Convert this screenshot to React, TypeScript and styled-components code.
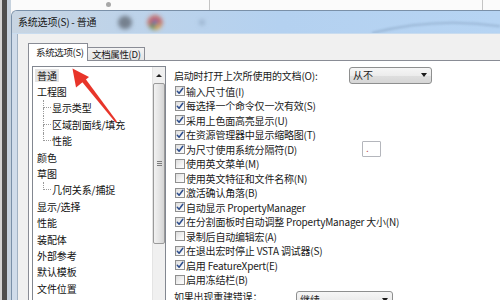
import React from 'react';
import styled, { createGlobalStyle } from 'styled-components';

const Global = createGlobalStyle`
  html, body { margin: 0; padding: 0; background: #fff; }
  body { font-family: "Noto Sans CJK SC", "Noto Sans", sans-serif; }
  * { box-sizing: border-box; }
`;

const Page = styled.div`
  width: 500px;
  height: 300px;
  overflow: hidden;
  display: flex;
  position: relative;
  font-size: 10px;
  color: #1a1a1a;
  background: #f6f6f6;
`;

const DesktopEdge = styled.div`
  width: 11px;
  flex: none;
  background: linear-gradient(to right, #d4d4d4 0 2px, #4e4e4e 2px 7px, #c6d2de 7px 11px);
`;

const Main = styled.div`
  flex: 1;
  min-width: 0;
  display: flex;
  flex-direction: column;
  background: #f6f6f6;
`;

const TopStrip = styled.div`
  height: 10px;
  flex: none;
  display: flex;
  background: #fbfbfb;
`;

const StripCell = styled.div<{ $w?: number }>`
  ${(p) => (p.$w ? `width:${p.$w}px; flex:none;` : 'flex:1;')}
  display: flex;
  align-items: center;
`;

const StripLine = styled.div`
  width: 1px;
  background: #c4c4c4;
`;

const Dot = styled.span`
  width: 5px;
  height: 5px;
  border-radius: 50%;
  background: #a8a8a8;
  margin-left: 95px;
  margin-top: -2px;
`;

const Window = styled.div`
  flex: 1;
  min-height: 0;
  display: flex;
  flex-direction: column;
  border-top: 1px solid #7a90a8;
  border-left: 1px solid #7a90a8;
  border-top-left-radius: 6px;
  overflow: hidden;
  background: #cfdcea;
`;

const TitleBar = styled.div`
  height: 23px;
  flex: none;
  position: relative;
  display: flex;
  align-items: center;
  padding-left: 6px;
  background: linear-gradient(to right, #c8d5e2 0%, #bed3e9 22%, #b4d1f0 55%, #b6d4f3 100%);
  border-bottom: 1px solid #c9dcef;
`;

const TitleDecor = styled.svg`
  position: absolute;
  left: 0;
  top: 0;
  width: 100%;
  height: 100%;
`;

const TitleText = styled.span`
  position: relative;
  font-size: 10px;
  line-height: 14px;
  letter-spacing: -0.2px;
  color: #151515;
`;

const Body = styled.div`
  flex: 1;
  min-height: 0;
  display: flex;
`;

const FrameSide = styled.div`
  width: 6px;
  flex: none;
  background: #d0dcea;
  border-right: 1px solid #a2b2c3;
`;

const Content = styled.div`
  flex: 1;
  min-width: 0;
  background: #f0f0f0;
  padding: 9px 0 0 10px;
  display: flex;
  flex-direction: column;
`;

const TabBar = styled.div`
  height: 17px;
  flex: none;
  display: flex;
  align-items: flex-end;
`;

const Tab = styled.div<{ $active?: boolean; $w: number }>`
  width: ${(p) => p.$w}px;
  height: ${(p) => (p.$active ? 18 : 13)}px;
  margin-bottom: ${(p) => (p.$active ? -1 : 0)}px;
  padding-left: ${(p) => (p.$active ? 7 : 4)}px;
  padding-top: ${(p) => (p.$active ? 2 : 0)}px;
  border: 1px solid #898c95;
  border-bottom: none;
  ${(p) => (p.$active ? '' : 'border-left: none;')}
  background: ${(p) => (p.$active ? '#fff' : 'linear-gradient(#f3f3f3, #e4e4e4)')};
  position: relative;
  z-index: ${(p) => (p.$active ? 1 : 0)};
  font-size: 9.5px;
  line-height: 12px;
  letter-spacing: -0.35px;
  white-space: nowrap;
  color: #1a1a1a;
`;

const Panel = styled.div`
  flex: 1;
  min-height: 0;
  background: #fff;
  border-top: 1px solid #898c95;
  border-left: 1px solid #898c95;
  padding: 5px 0 0 3px;
  display: flex;
  align-items: flex-start;
`;

const Tree = styled.div`
  width: 134px;
  height: 250px;
  flex: none;
  border: 1px solid #828790;
  display: flex;
  background: #fff;
`;

const TreeList = styled.div`
  flex: 1;
  min-width: 0;
  padding-left: 4px;
  display: flex;
  flex-direction: column;
`;

const TreeRow = styled.div`
  height: 16.4px;
  flex: none;
  display: flex;
  align-items: stretch;
  white-space: nowrap;
`;

const TreeText = styled.span<{ $sel?: boolean }>`
  align-self: center;
  line-height: 13px;
  font-size: 10px;
  letter-spacing: -0.1px;
  color: #111;
  ${(p) => (p.$sel ? 'background:#e4e4e4; padding: 0 2px; margin-left:-2px;' : '')}
`;

const Connector = styled.span`
  width: 8px;
  margin-left: 6px;
  margin-right: 1px;
  display: flex;
  flex-direction: column;
  flex: none;
`;

const ConnTop = styled.span`
  flex: 1;
  border-left: 1px dotted #9a9a9a;
  border-bottom: 1px dotted #9a9a9a;
`;

const ConnBottom = styled.span<{ $last?: boolean }>`
  flex: 1;
  border-left: 1px dotted ${(p) => (p.$last ? 'transparent' : '#9a9a9a')};
`;

const ScrollBar = styled.div`
  width: 13px;
  flex: none;
  background: #f0f0f0;
  border-left: 1px solid #e4e4e4;
  display: flex;
  flex-direction: column;
`;

const ScrollUp = styled.div`
  height: 15px;
  flex: none;
  display: flex;
  align-items: center;
  justify-content: center;
  padding-top: 1px;
`;

const UpTri = styled.span`
  width: 0;
  height: 0;
  border-left: 3px solid transparent;
  border-right: 3px solid transparent;
  border-bottom: 3px solid #222;
`;

const Thumb = styled.div`
  height: 161px;
  flex: none;
  margin: 1px 0 0 0;
  border: 1px solid #9a9a9a;
  border-radius: 2px;
  background: linear-gradient(to right, #f2f2f2, #e2e2e2 60%, #d4d4d4);
  display: flex;
  align-items: center;
  justify-content: center;
`;

const Grip = styled.span`
  width: 5px;
  height: 5px;
  background: repeating-linear-gradient(#7c7c7c 0 1px, transparent 1px 2px);
`;

const Right = styled.div`
  margin-left: 8px;
  display: flex;
  flex-direction: column;
  flex: 1;
  min-width: 0;
`;

const LabelRow = styled.div`
  height: 18px;
  display: flex;
  align-items: center;
  white-space: nowrap;
`;

const Label = styled.span<{ $w?: number }>`
  font-size: 10px;
  line-height: 13px;
  letter-spacing: -0.2px;
  color: #1a1a1a;
  white-space: nowrap;
  ${(p) => (p.$w ? `width:${p.$w}px; flex:none;` : '')}
`;

const Combo = styled.div<{ $w: number; $h: number; $top?: number }>`
  width: ${(p) => p.$w}px;
  height: ${(p) => p.$h}px;
  flex: none;
  margin-top: ${(p) => p.$top ?? 0}px;
  border: 1px solid #8e8f8f;
  border-radius: 3px;
  background: linear-gradient(#f6f6f6, #ececec 50%, #dfdfdf 50%, #d6d6d6);
  display: flex;
  align-items: center;
  padding: 0 4px 0 3px;
  font-size: 10px;
  line-height: 12px;
`;

const ComboText = styled.span`
  flex: 1;
`;

const DownTri = styled.span`
  width: 0;
  height: 0;
  border-left: 3px solid transparent;
  border-right: 3px solid transparent;
  border-top: 4px solid #1a1a1a;
`;

const CheckRow = styled.div`
  height: 14.5px;
  flex: none;
  display: flex;
  align-items: center;
  white-space: nowrap;
`;

const Box = styled.span`
  width: 10px;
  height: 10px;
  flex: none;
  margin-left: 1px;
  margin-right: 1px;
  border: 1px solid #8f8f8f;
  background: linear-gradient(135deg, #dcdcdc, #f4f4f4 60%, #fdfdfd);
  display: flex;
  align-items: center;
  justify-content: center;
`;

const SepBox = styled.span`
  width: 19px;
  height: 16px;
  flex: none;
  border: 1px solid #b4b6bc;
  border-radius: 1px;
  background: #fff;
  padding-left: 3px;
  font-size: 10px;
  line-height: 12px;
  color: #c05050;
`;

const BottomRow = styled.div`
  height: 20px;
  flex: none;
  display: flex;
  align-items: flex-start;
  padding-top: 3px;
  white-space: nowrap;
`;

const Overlay = styled.svg`
  position: absolute;
  left: 0;
  top: 0;
  pointer-events: none;
`;

type TreeItem = { t: string; sel?: boolean; child?: boolean; last?: boolean };

const treeItems: TreeItem[] = [
  { t: '普通', sel: true },
  { t: '工程图' },
  { t: '显示类型', child: true },
  { t: '区域剖面线/填充', child: true },
  { t: '性能', child: true, last: true },
  { t: '颜色' },
  { t: '草图' },
  { t: '几何关系/捕捉', child: true, last: true },
  { t: '显示/选择' },
  { t: '性能' },
  { t: '装配体' },
  { t: '外部参考' },
  { t: '默认模板' },
  { t: '文件位置' },
  { t: 'FeatureManager' },
];

type Opt = { t: string; on: boolean; sep?: boolean };

const options: Opt[] = [
  { t: '输入尺寸值(I)', on: true },
  { t: '每选择一个命令仅一次有效(S)', on: true },
  { t: '采用上色面高亮显示(U)', on: true },
  { t: '在资源管理器中显示缩略图(T)', on: true },
  { t: '为尺寸使用系统分隔符(D)', on: true, sep: true },
  { t: '使用英文菜单(M)', on: false },
  { t: '使用英文特征和文件名称(N)', on: false },
  { t: '激活确认角落(B)', on: true },
  { t: '自动显示 PropertyManager', on: true },
  { t: '在分割面板时自动调整 PropertyManager 大小(N)', on: true },
  { t: '录制后自动编辑宏(A)', on: false },
  { t: '在退出宏时停止 VSTA 调试器(S)', on: true },
  { t: '启用 FeatureXpert(E)', on: true },
  { t: '启用冻结栏(B)', on: false },
];

const CheckMark = () => (
  <svg width="8" height="8" viewBox="0 0 8 8">
    <path d="M1.3 4.3 L3.1 6.3 L6.8 1.2" fill="none" stroke="#2c4c8c" strokeWidth="1.5" strokeLinecap="round" strokeLinejoin="round" />
  </svg>
);

export default function App() {
  return (
    <>
      <Global />
      <Page>
        <DesktopEdge />
        <Main>
          <TopStrip>
            <StripCell $w={198}>
              <Dot />
            </StripCell>
            <StripLine />
            <StripCell $w={272} />
            <StripLine />
            <StripCell />
          </TopStrip>
          <Window>
            <TitleBar>
              <TitleDecor viewBox="0 0 488 23" preserveAspectRatio="none">
                <defs>
                  <filter id="bl" x="-50%" y="-50%" width="200%" height="200%">
                    <feGaussianBlur stdDeviation="2.2" />
                  </filter>
                  <filter id="bl2" x="-50%" y="-50%" width="200%" height="200%">
                    <feGaussianBlur stdDeviation="1.2" />
                  </filter>
                </defs>
                <g filter="url(#bl)">
                  <circle cx="113" cy="12" r="7" fill="#5d6670" opacity="0.75" />
                  <circle cx="143" cy="12" r="7.5" fill="#c84a3a" opacity="0.8" />
                  <path d="M137 15 A7 7 0 0 0 143 19.5 L143 12 Z" fill="#3e9a4a" opacity="0.8" />
                  <path d="M149 15 A7 7 0 0 1 143 19.5 L143 12 Z" fill="#e0b83a" opacity="0.8" />
                  <circle cx="143" cy="12" r="2.6" fill="#3c6fc4" opacity="0.9" />
                  <circle cx="190" cy="12" r="3" fill="#7d95b0" opacity="0.5" />
                </g>
                <path d="M360 23 Q 425 6 488 16" fill="none" stroke="#6d87a6" strokeWidth="2" opacity="0.35" filter="url(#bl2)" />
              </TitleDecor>
              <TitleText>系统选项(S) - 普通</TitleText>
            </TitleBar>
            <Body>
              <FrameSide />
              <Content>
                <TabBar>
                  <Tab $active $w={60}>系统选项(S)</Tab>
                  <Tab $w={57}>文档属性(D)</Tab>
                </TabBar>
                <Panel>
                  <Tree>
                    <TreeList>
                      {treeItems.map((it, i) => (
                        <TreeRow key={i}>
                          {it.child && (
                            <Connector>
                              <ConnTop />
                              <ConnBottom $last={it.last} />
                            </Connector>
                          )}
                          <TreeText $sel={it.sel}>{it.t}</TreeText>
                        </TreeRow>
                      ))}
                    </TreeList>
                    <ScrollBar>
                      <ScrollUp>
                        <UpTri />
                      </ScrollUp>
                      <Thumb>
                        <Grip />
                      </Thumb>
                    </ScrollBar>
                  </Tree>
                  <Right>
                    <LabelRow>
                      <Label $w={175}>启动时打开上次所使用的文档(O):</Label>
                      <Combo $w={83} $h={17}>
                        <ComboText>从不</ComboText>
                        <DownTri />
                      </Combo>
                    </LabelRow>
                    {options.map((o, i) => (
                      <CheckRow key={i}>
                        <Box>{o.on && <CheckMark />}</Box>
                        <Label $w={o.sep ? 176 : undefined}>{o.t}</Label>
                        {o.sep && <SepBox>.</SepBox>}
                      </CheckRow>
                    ))}
                    <BottomRow>
                      <Label $w={122}>如果出现重建错误：</Label>
                      <Combo $w={97} $h={18} $top={1}>
                        <ComboText>继续</ComboText>
                        <DownTri />
                      </Combo>
                    </BottomRow>
                  </Right>
                </Panel>
              </Content>
            </Body>
          </Window>
        </Main>
        <Overlay width="500" height="300" viewBox="0 0 500 300">
          <polygon points="72.5,68.5 89,77 76,87.5" fill="#e8352a" />
          <polygon points="80.5,80 84.5,77.5 117,121.5 115.5,122.5" fill="#e8352a" />
        </Overlay>
      </Page>
    </>
  );
}
